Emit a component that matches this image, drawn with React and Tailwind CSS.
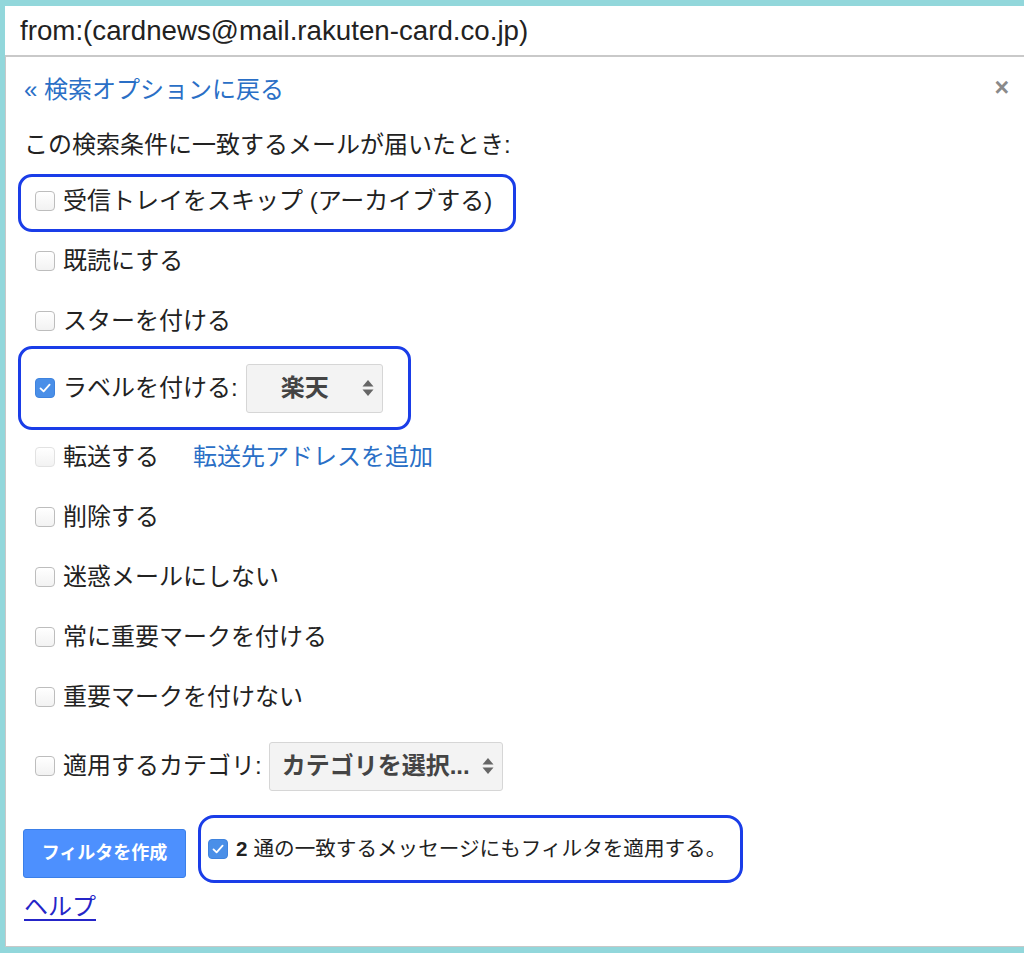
import React from "react";

const FONT = { fontFamily: '"Liberation Sans", "Noto Sans CJK JP", sans-serif' };

function Check({ checked = false, disabled = false }) {
  if (checked) {
    return (
      <span className="flex h-[20px] w-[20px] shrink-0 items-center justify-center rounded-[4px] bg-[#4a8fe8] border border-[#3f83de]">
        <svg width="14" height="14" viewBox="0 0 14 14">
          <path d="M2.5 7.4 L5.6 10.4 L11.6 3.6" fill="none" stroke="#fff" strokeWidth="1.8" strokeLinecap="round" strokeLinejoin="round" />
        </svg>
      </span>
    );
  }
  return (
    <span
      className={
        "block h-[20px] w-[20px] shrink-0 rounded-[4px] border-[1.5px] bg-gradient-to-b from-white to-[#f2f2f2] " +
        (disabled ? "border-[#e2e2e2]" : "border-[#bdbdbd]")
      }
    />
  );
}

function Arrows() {
  return (
    <svg width="12" height="18" viewBox="0 0 12 18" className="shrink-0">
      <path d="M0.5 7.5 L6 1 L11.5 7.5 Z" fill="#666" />
      <path d="M0.5 10.5 L6 17 L11.5 10.5 Z" fill="#666" />
    </svg>
  );
}

function Row({ children, className = "", box = "" }) {
  return (
    <div className={"flex " + className}>
      <div className={"flex items-center rounded-[14px] border-[3px] pl-[14px] " + box}>{children}</div>
    </div>
  );
}

export default function App() {
  return (
    <div className="min-h-[953px] w-[1024px] overflow-hidden bg-[#92d7db] pt-[6px] pl-[5px]" style={FONT}>
      {/* search input */}
      <div className="flex h-[51px] items-center border-b-2 border-[#c9c9c9] bg-white pl-[15px] text-[27.7px] text-[#222] leading-none">
        from:(cardnews@mail.rakuten-card.co.jp)
      </div>

      {/* panel */}
      <div className="h-[890px] border-l border-b border-[#c8c8c8] bg-white pl-[12px] text-[#222]">
        <div className="flex items-start justify-between pt-[18px]">
          <a className="ml-[6px] text-[24px] leading-[30px] text-[#2a6fc6]">« 検索オプションに戻る</a>
          <span className="mr-[15px] mt-[-3px] text-[25px] font-bold leading-[30px] text-[#8a8a8a]">×</span>
        </div>

        <div className="ml-[6px] mt-[25px] text-[24px] leading-[30px]">この検索条件に一致するメールが届いたとき:</div>

        <div className="mt-[14px] flex flex-col text-[24px] leading-[30px]">
          <Row box="h-[58px] w-[498px] border-[#1a3de8] pb-[4px]">
            <Check />
            <span className="ml-[8px]">受信トレイをスキップ (アーカイブする)</span>
          </Row>
          <Row box="h-[58px] border-transparent">
            <Check />
            <span className="ml-[8px]">既読にする</span>
          </Row>
          <Row box="h-[56px] border-transparent pt-[6px]">
            <Check />
            <span className="ml-[8px]">スターを付ける</span>
          </Row>
          <Row box="h-[84px] w-[393px] border-[#1a3de8]">
            <Check checked />
            <span className="ml-[8px]">ラベルを付ける:</span>
            <span className="ml-[8px] flex h-[49px] w-[137px] items-center rounded-[3px] border border-[#d6d6d6] bg-[#f3f3f3] pl-[34px] pr-[8px]">
              <span className="font-bold text-[#444]">楽天</span>
              <span className="ml-auto flex">
                <Arrows />
              </span>
            </span>
          </Row>
          <Row box="h-[60px] border-transparent pb-[6px]">
            <Check disabled />
            <span className="ml-[8px]">転送する</span>
            <a className="ml-[34px] text-[#2a6fc6]">転送先アドレスを追加</a>
          </Row>
          <Row box="h-[60px] border-transparent pb-[6px]">
            <Check />
            <span className="ml-[8px]">削除する</span>
          </Row>
          <Row box="h-[60px] border-transparent pb-[6px]">
            <Check />
            <span className="ml-[8px]">迷惑メールにしない</span>
          </Row>
          <Row box="h-[60px] border-transparent pb-[6px]">
            <Check />
            <span className="ml-[8px]">常に重要マークを付ける</span>
          </Row>
          <Row box="h-[60px] border-transparent pb-[6px]">
            <Check />
            <span className="ml-[8px]">重要マークを付けない</span>
          </Row>
          <Row box="h-[72px] border-transparent">
            <Check />
            <span className="ml-[8px]">適用するカテゴリ:</span>
            <span className="ml-[7px] flex h-[49px] w-[234px] items-center rounded-[3px] border border-[#d6d6d6] bg-[#f3f3f3] pl-[12px] pr-[8px]">
              <span className="font-bold text-[#444]">カテゴリを選択...</span>
              <span className="ml-auto flex">
                <Arrows />
              </span>
            </span>
          </Row>
        </div>

        {/* bottom row */}
        <div className="mt-[13px] flex items-start">
          <button className="ml-[5px] mt-[14px] flex h-[49px] w-[163px] items-center justify-center rounded-[3px] border border-[#3b7fe8] bg-[#4d90fe] text-[18px] font-bold text-white">
            フィルタを作成
          </button>
          <div className="ml-[12px] flex h-[68px] w-[545px] items-center rounded-[16px] border-[3px] border-[#1a3de8] pl-[7px] text-[20.6px] leading-[26px]">
            <Check checked />
            <span className="ml-[8px] font-bold">2</span>
            <span className="ml-[6px]">通の一致するメッセージにもフィルタを適用する。</span>
          </div>
        </div>

        <a className="ml-[6px] mt-[9px] inline-block text-[24px] leading-[30px] text-[#2525c8] underline underline-offset-4">ヘルプ</a>
      </div>
    </div>
  );
}
